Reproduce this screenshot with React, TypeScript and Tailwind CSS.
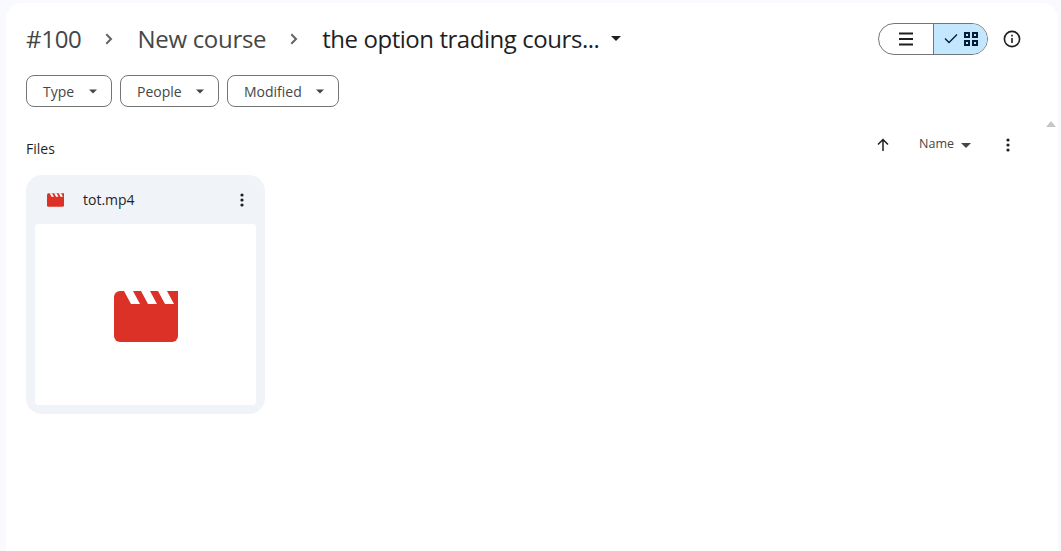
const F = "[font-family:'Open_Sans','Noto_Sans',sans-serif]";

function Caret({ className = "" }: { className?: string }) {
  return (
    <svg width="10" height="5" viewBox="0 0 10 5" className={className}>
      <path d="M0 0h10L5 5z" fill="currentColor" />
    </svg>
  );
}

function Chevron() {
  return (
    <svg width="24" height="24" viewBox="0 0 24 24" className="text-[#5f6368]">
      <path d="M9.3 7.3 14 12l-4.7 4.7" fill="none" stroke="currentColor" strokeWidth="2" />
    </svg>
  );
}

function Dots({ className = "" }: { className?: string }) {
  return (
    <svg width="4" height="14" viewBox="0 0 4 14" className={className}>
      <circle cx="2" cy="2" r="1.6" fill="currentColor" />
      <circle cx="2" cy="7" r="1.6" fill="currentColor" />
      <circle cx="2" cy="12" r="1.6" fill="currentColor" />
    </svg>
  );
}

function Clapper({ w, h }: { w: number; h: number }) {
  return (
    <svg width={w} height={h} viewBox="0 0 64 51">
      <path
        d="M6 0H64V45a6 6 0 0 1-6 6H6a6 6 0 0 1-6-6V6a6 6 0 0 1 6-6z"
        fill="#dc3126"
      />
      <path d="M10 0h9l7 13h-9zM27 0h9l7 13h-9zM44 0h9l7 13h-9z" fill="#fff" />
    </svg>
  );
}

function Filter({ label, w }: { label: string; w: string }) {
  return (
    <button className={`flex h-8 items-center justify-between rounded-lg border border-[#747775] pl-4 text-[14px] text-[#444746] ${w}`}>
      <span>{label}</span>
      <Caret className="w-[8px] text-[#444746]" />
    </button>
  );
}

export default function App() {
  return (
    <div className={`h-[551px] w-[1061px] overflow-hidden bg-[#f8fafd] pl-[6px] pt-[3px] pr-[3px] ${F}`}>
      <div className="relative h-[548px] rounded-t-2xl bg-white pl-5 pr-[22px]">
        <div className="flex h-[72px] items-center justify-between pb-[1px] pr-[15px]">
          <div className="flex items-center text-[24px] leading-8 text-[#444746]">
            <span className="tracking-[-0.3px]">#100</span>
            <span className="ml-[16px] mr-[16px]"><Chevron /></span>
            <span className="tracking-[-0.3px]">New course</span>
            <span className="ml-[16px] mr-[16px]"><Chevron /></span>
            <span className="tracking-[-0.45px] text-[#1f1f1f]">the option trading cours...</span>
            <Caret className="ml-[12px] text-[#1f1f1f]" />
          </div>
          <div className="flex items-center">
            <div className="flex h-8 w-[110px] overflow-hidden rounded-full border border-[#747775]">
              <div className="flex w-[55px] items-center justify-center border-r border-[#747775] pr-[1px]">
                <svg width="16" height="14" viewBox="0 0 16 14">
                  <path d="M1 1.5h14M1 7h14M1 12.5h14" stroke="#1f1f1f" strokeWidth="1.8" />
                </svg>
              </div>
              <div className="flex flex-1 items-center justify-center gap-[6px] bg-[#c2e7ff] pl-[1px]">
                <svg width="14" height="11" viewBox="0 0 14 11">
                  <path d="M1 5.5 5 9.5 13 1.5" fill="none" stroke="#001d35" strokeWidth="1.3" />
                </svg>
                <svg width="14" height="14" viewBox="0 0 14 14">
                  <path d="M1 1h4v4H1zM9 1h4v4H9zM1 9h4v4H1zM9 9h4v4H9z" fill="none" stroke="#001d35" strokeWidth="2" />
                </svg>
              </div>
            </div>
            <svg width="18" height="18" viewBox="0 0 18 18" className="ml-[15px]">
              <circle cx="9" cy="9" r="7.6" fill="none" stroke="#1f1f1f" strokeWidth="1.6" />
              <path d="M8.2 8h1.6v5H8.2zM8.2 4.8h1.6v1.7H8.2z" fill="#1f1f1f" />
            </svg>
          </div>
        </div>

        <div className="flex gap-2">
          <Filter label="Type" w="w-[86px] pr-[14px]" />
          <Filter label="People" w="w-[99px] pr-[14px]" />
          <Filter label="Modified" w="w-[112px] pr-[14px]" />
        </div>

        <div className="mt-[17px] flex h-[50px] items-center justify-between">
          <span className="mb-[2px] text-[14px] font-medium text-[#1f1f1f]">Files</span>
          <div className="mb-[9px] flex items-center pr-[26px]">
            <svg width="14" height="14" viewBox="0 0 14 14" className="mr-[29px]">
              <path d="M7 13V2M2 6.5 7 1.5l5 5" fill="none" stroke="#1f1f1f" strokeWidth="1.5" />
            </svg>
            <span className="text-[12.5px] text-[#444746]">Name</span>
            <Caret className="ml-[7px] mr-[35px] mt-[2px] text-[#444746]" />
            <Dots className="text-[#1f1f1f]" />
          </div>
        </div>

        <div className="mt-[1px] h-[239px] w-[239px] rounded-2xl bg-[#f0f4f9] px-[9px] pb-[9px]">
          <div className="flex h-[49px] items-center pl-[12px] pr-[12px]">
            <Clapper w={17} h={14} />
            <span className="ml-[19px] flex-1 text-[14px] text-[#1f1f1f]">tot.mp4</span>
            <Dots className="text-[#1f1f1f]" />
          </div>
          <div className="flex h-[181px] items-center justify-center rounded-[4px] bg-white pt-[3px]">
            <Clapper w={64} h={51} />
          </div>
        </div>

        <svg width="10" height="6" viewBox="0 0 10 6" className="absolute right-[2px] top-[118px]">
          <path d="M0 6 5 0l5 6z" fill="#c4c7c5" />
        </svg>
      </div>
    </div>
  );
}
